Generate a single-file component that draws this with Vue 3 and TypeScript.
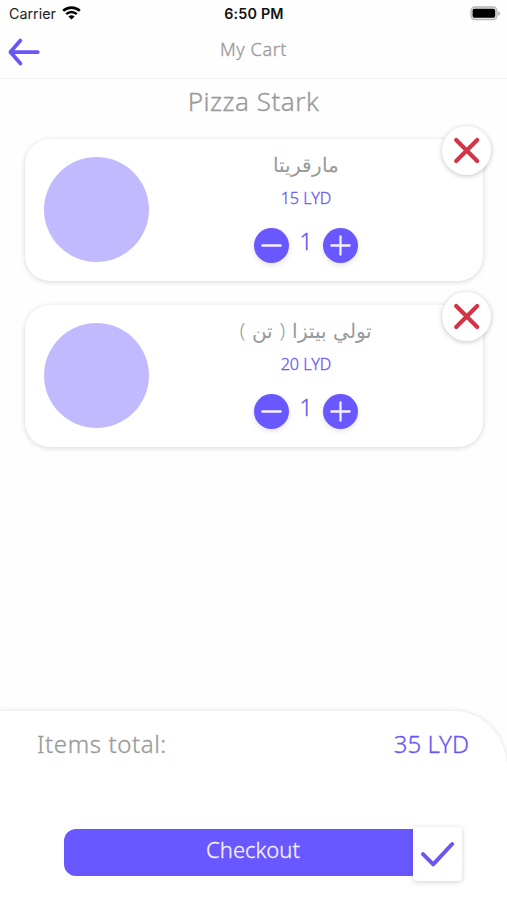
<script setup lang="ts">
import { computed, ref } from 'vue'

interface CartItem {
  id: number
  name: string
  price: number
  qty: number
}

const items = ref<CartItem[]>([
  { id: 1, name: 'مارقريتا', price: 15, qty: 1 },
  { id: 2, name: 'تولي بيتزا ( تن )', price: 20, qty: 1 },
])

const total = computed(() => items.value.reduce((sum, i) => sum + i.price * i.qty, 0))

function change(item: CartItem, step: number) {
  item.qty = Math.max(1, item.qty + step)
}

function remove(id: number) {
  items.value = items.value.filter((i) => i.id !== id)
}
</script>

<template>
  <div class="screen">
    <div class="status">
      <div class="carrier">
        <span>Carrier</span>
        <svg width="19" height="14" viewBox="0 0 19 14">
          <path d="M1.2 4.9C5.8.4 13.2.4 17.8 4.9" fill="none" stroke="#000" stroke-width="2.7" />
          <path d="M4.2 8.1c3-2.9 7.6-2.9 10.6 0" fill="none" stroke="#000" stroke-width="2.4" />
          <path d="M6.4 10.5c1.8-1.6 4.4-1.6 6.2 0L9.5 13.6z" />
        </svg>
      </div>
      <div class="time">6:50 PM</div>
      <svg class="battery" width="31" height="15" viewBox="0 0 31 15">
        <rect x="1" y="1" width="26" height="12.6" rx="3.8" fill="#e4e4e4" stroke="#b8b8b8" stroke-width="1.3" />
        <rect x="2.6" y="2.8" width="22.6" height="9" rx="1.8" fill="#000" />
        <path d="M28.4 5.2c2.2.8 2.2 3.6 0 4.4z" fill="#aaa" />
      </svg>
    </div>

    <header class="bar">
      <button class="back" aria-label="Back">
        <svg width="34" height="30" viewBox="0 0 34 30">
          <path d="M30.8 15.1H3.4M13.4 3.6 3.4 15.1l10 11.4" fill="none" stroke="#6a56f2" stroke-width="3.8" stroke-linecap="round" stroke-linejoin="round" />
        </svg>
      </button>
      <h1 class="title">My Cart</h1>
    </header>

    <h2 class="shop">Pizza Stark</h2>

    <main class="list">
      <article v-for="item in items" :key="item.id" class="card">
        <div class="thumb"></div>
        <div class="info">
          <div class="name" dir="rtl">{{ item.name }}</div>
          <div class="price">{{ item.price }} LYD</div>
          <div class="stepper">
            <button class="round" aria-label="Less" @click="change(item, -1)">
              <svg width="35" height="35" viewBox="0 0 35 35">
                <path d="M8.3 17.5h18.4" stroke="#f3f0ff" stroke-width="2.3" stroke-linecap="round" />
              </svg>
            </button>
            <span class="qty">{{ item.qty }}</span>
            <button class="round" aria-label="More" @click="change(item, 1)">
              <svg width="35" height="35" viewBox="0 0 35 35">
                <path d="M8.3 17.5h18.4M17.5 8.3v18.4" stroke="#f3f0ff" stroke-width="2.3" stroke-linecap="round" />
              </svg>
            </button>
          </div>
        </div>
        <button class="remove" aria-label="Remove" @click="remove(item.id)">
          <svg width="49" height="49" viewBox="0 0 49 49">
            <path d="M14.2 14l21 21M35.2 14l-21 21" stroke="#d23545" stroke-width="4.2" stroke-linecap="round" />
          </svg>
        </button>
      </article>
    </main>

    <footer class="summary">
      <div class="totals">
        <span class="label">Items total:</span>
        <span class="amount">{{ total }} LYD</span>
      </div>
      <div class="pay">
        <button class="checkout">Checkout</button>
        <div class="tick">
          <svg width="49" height="53" viewBox="0 0 49 53">
            <path d="M10 27.2 20.2 37.4 39.2 17" fill="none" stroke="#6a56f2" stroke-width="4" stroke-linecap="round" stroke-linejoin="round" />
          </svg>
        </div>
      </div>
    </footer>
  </div>
</template>

<style>
body {
  margin: 0;
  background: #fefefe;
}
</style>

<style scoped>
.screen {
  width: 507px;
  height: 900px;
  display: flex;
  flex-direction: column;
  overflow: hidden;
  background: #fefefe;
  color: #999;
  font-family: 'Noto Sans', 'DejaVu Sans', sans-serif;
  font-weight: 300;
  -webkit-text-stroke: 0.3px currentColor;
}
button {
  padding: 0;
  border: 0;
  background: none;
  font: inherit;
  display: block;
}
svg {
  display: block;
}
.status {
  display: grid;
  grid-template-columns: 1fr auto 1fr;
  height: 28px;
  box-sizing: border-box;
  padding: 0 6px 0 9px;
  align-items: center;
  font: 400 14.3px/28px Inter, sans-serif;
  color: #222;
  -webkit-text-stroke: 0;
}
.carrier {
  display: flex;
  align-items: center;
  gap: 6px;
}
.carrier svg {
  margin-top: -2px;
}
.time {
  margin-left: -2px;
  font-weight: 600;
  letter-spacing: 0.2px;
  color: #111;
}
.battery {
  justify-self: end;
  margin-top: -2px;
}
.bar {
  display: grid;
  grid-template-columns: 60px 1fr 60px;
  height: 51px;
  box-sizing: border-box;
  border-bottom: 1px solid #f4f3f3;
}
.back {
  margin: 9px 0 0 7px;
  width: 34px;
  height: 30px;
}
.title {
  margin: 0;
  font-size: 18px;
  line-height: 42px;
  font-weight: 300;
  letter-spacing: 0.6px;
  text-align: center;
}
.shop {
  margin: 0;
  height: 59.5px;
  font-size: 26px;
  line-height: 45px;
  font-weight: 300;
  letter-spacing: 0.5px;
  text-align: center;
}
.list {
  display: flex;
  flex-direction: column;
  gap: 24px;
  padding: 0 24px 0 25px;
}
.card {
  position: relative;
  display: flex;
  height: 142px;
  border-radius: 25px;
  background: #fff;
  box-shadow: 0 1px 5px rgba(70, 50, 50, 0.2);
}
.thumb {
  width: 105.5px;
  height: 105.5px;
  margin: 18px 0 0 18.5px;
  border-radius: 50%;
  background: #c2baff;
  flex: none;
}
.info {
  width: 206px;
  margin-left: 54px;
  display: flex;
  flex-direction: column;
  align-items: center;
}
.name {
  height: 46px;
  line-height: 51px;
  font-size: 20.4px;
  word-spacing: 1.2px;
  white-space: nowrap;
  -webkit-text-stroke: 0;
}
.price {
  height: 43px;
  line-height: 26px;
  font-size: 16.2px;
  color: #6a56f2;
}
.stepper {
  display: flex;
}
.round {
  width: 35px;
  height: 35px;
  border-radius: 50%;
  background: #6957ff;
  box-shadow: 0 2px 5px rgba(70, 50, 70, 0.15);
}
.qty {
  width: 34px;
  text-align: center;
  font-size: 23px;
  line-height: 26px;
  color: #6a56f2;
}
.remove {
  position: absolute;
  top: -13px;
  right: -8px;
  width: 49px;
  height: 49px;
  border-radius: 50%;
  background: #fff;
  box-shadow: 0 1px 5px rgba(70, 50, 50, 0.3);
}
.summary {
  margin-top: auto;
  height: 189px;
  border-top-right-radius: 53px 57px;
  background: #fff;
  box-shadow: 0 0 5px rgba(70, 50, 50, 0.16);
}
.totals {
  display: flex;
  justify-content: space-between;
  height: 116px;
  padding: 0 38px 0 37px;
  font-size: 24px;
  line-height: 66px;
}
.amount {
  color: #6a56f2;
}
.label {
  letter-spacing: 0.6px;
}
.pay {
  display: flex;
  align-items: center;
  height: 54px;
  padding-left: 64px;
}
.checkout {
  width: 349px;
  height: 47px;
  padding: 0 0 7px 29px;
  margin-top: -3px;
  border-radius: 12px 0 0 12px;
  background: #6957ff;
  color: #f6f3ff;
  font-size: 22px;
  line-height: 40px;
  text-align: center;
}
.tick {
  width: 49px;
  height: 54px;
  border-radius: 4px;
  background: #fff;
  box-shadow: 0 1px 5px rgba(70, 50, 50, 0.24);
}
</style>
